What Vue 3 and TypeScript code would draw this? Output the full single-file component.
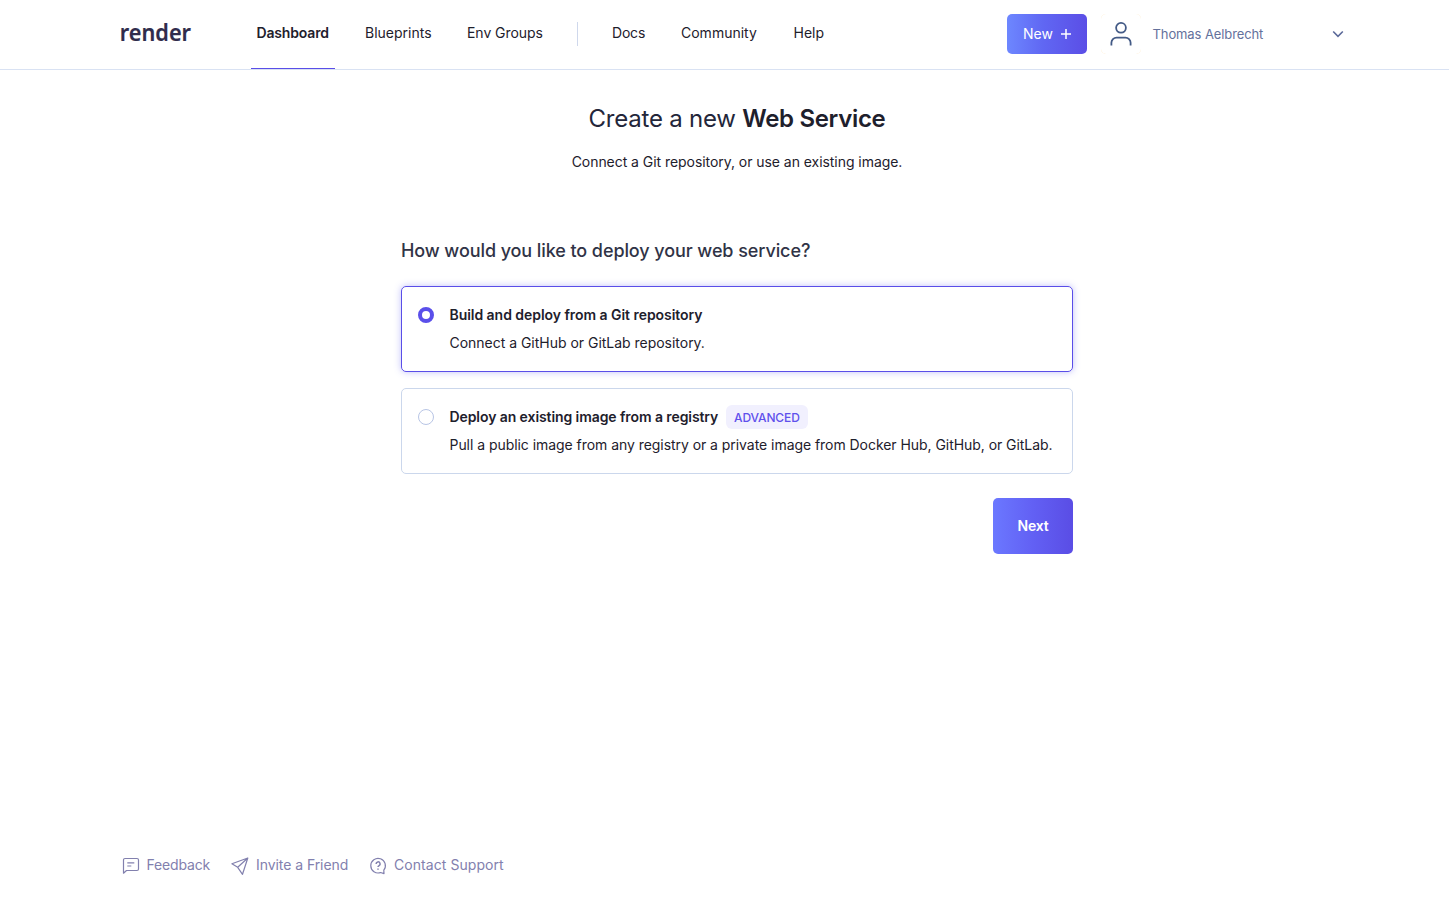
<script setup lang="ts">
import { ref } from 'vue'

interface NavItem { id: string; label: string }
interface DeployOption { id: string; title: string; detail: string; badge?: string }

const primary: NavItem[] = [
  { id: 'dashboard', label: 'Dashboard' },
  { id: 'blueprints', label: 'Blueprints' },
  { id: 'env', label: 'Env Groups' },
]
const secondary: NavItem[] = [
  { id: 'docs', label: 'Docs' },
  { id: 'community', label: 'Community' },
  { id: 'help', label: 'Help' },
]
const options: DeployOption[] = [
  { id: 'git', title: 'Build and deploy from a Git repository', detail: 'Connect a GitHub or GitLab repository.' },
  {
    id: 'image',
    title: 'Deploy an existing image from a registry',
    detail: 'Pull a public image from any registry or a private image from Docker Hub, GitHub, or GitLab.',
    badge: 'ADVANCED',
  },
]
const selected = ref('git')
</script>

<template>
  <div class="page">
    <header class="topbar">
      <svg class="logo" width="72" height="30" viewBox="0 0 72 30">
        <text x="-0.2" y="24" textLength="71.2" lengthAdjust="spacingAndGlyphs">render</text>
      </svg>
      <nav class="nav">
        <a v-for="item in primary" :key="item.id" :class="['link', item.id, { active: item.id === 'dashboard' }]"><span>{{ item.label }}</span></a>
        <i class="divider"></i>
        <a v-for="item in secondary" :key="item.id" :class="['link', item.id]"><span>{{ item.label }}</span></a>
      </nav>
      <button class="new">
        <span>New</span>
        <svg width="12" height="12" viewBox="0 0 12 12"><path d="M6 1v10M1 6h10" /></svg>
      </button>
      <div class="account">
        <div class="avatar-ring">
          <div class="avatar">
            <svg width="24" height="26" viewBox="0 0 24 26">
              <circle cx="12" cy="6.800" r="4.900" />
              <path d="M2.400 24.500v-2.700a5.200 5.200 0 0 1 5.200-5.200h8.800a5.200 5.200 0 0 1 5.200 5.200v2.700" />
            </svg>
          </div>
        </div>
        <span class="user">Thomas Aelbrecht</span>
        <svg class="chevron" width="12" height="8" viewBox="0 0 12 8"><path d="M1.200 1.500 6 6.300l4.800-4.800" /></svg>
      </div>
    </header>

    <main class="content">
      <h1><span>Create a new</span> <b>Web Service</b></h1>
      <p class="sub"><span>Connect a Git repository, or use an existing image.</span></p>
      <h2><span>How would you like to deploy your web service?</span></h2>
      <label v-for="opt in options" :key="opt.id" :class="['card', opt.id, { selected: selected === opt.id }]" @click="selected = opt.id">
        <i class="radio"></i>
        <div class="body">
          <div class="title"><strong>{{ opt.title }}</strong><em v-if="opt.badge" class="badge"><span>{{ opt.badge }}</span></em></div>
          <div class="detail"><span>{{ opt.detail }}</span></div>
        </div>
      </label>
      <button class="next"><span>Next</span></button>
    </main>

    <footer class="footer">
      <a class="feedback">
        <svg width="18" height="18" viewBox="0 0 18 18">
          <path d="M1.500 16.200V3a1.500 1.500 0 0 1 1.500-1.500h12A1.500 1.500 0 0 1 16.500 3v9a1.500 1.500 0 0 1-1.500 1.500H4.500zM5.300 5.800h7M5.300 9h4" />
        </svg>
        <span>Feedback</span>
      </a>
      <a class="invite">
        <svg width="18" height="18" viewBox="0 0 18 18">
          <path d="M16.800 1 .900 6.800l5.800 3.500 4.800 7zM16.800 1 6.700 10.300" />
        </svg>
        <span>Invite a Friend</span>
      </a>
      <a class="support">
        <svg width="18" height="18" viewBox="0 0 18 18">
          <path d="M11.600 15.500a7.300 7.300 0 1 1 3.200-2.300l.200 3.400z" />
          <path class="mark" d="M7.100 6.900a2 2 0 1 1 3 1.700c-.700.400-1.100.700-1.100 1.400M9 11.400v1.400" />
        </svg>
        <span>Contact Support</span>
      </a>
    </footer>
  </div>
</template>

<style>
body { margin: 0; background: #fff; }
</style>

<style scoped>
.page {
  box-sizing: border-box;
  height: 899px;
  display: flex;
  flex-direction: column;
  font-family: Inter, "Liberation Sans", sans-serif;
  font-size: 14px;
  line-height: 20px;
  color: #1e202c;
  white-space: nowrap;
  overflow: hidden;
}
svg { display: block; flex: none; fill: none; overflow: visible; }
button { border: 0; padding: 0; margin: 0; font: inherit; color: #fff; display: flex; align-items: center; border-radius: 5px; }
.topbar { flex: none; box-sizing: border-box; height: 70px; display: flex; border-bottom: 1px solid #d9e2f3; padding-left: 120px; }
.logo { margin-top: 17px; }
.logo text { font: 600 24px "Noto Sans", "Open Sans", sans-serif; fill: #302c4c; stroke: #302c4c; stroke-width: .2; }
.nav { display: flex; margin-left: 59px; width: 579px; }
.link { flex: none; box-sizing: border-box; height: 69px; padding: 23px 6px 0; margin-right: 24px; }
.link.active { font-weight: 600; border-bottom: 1px solid #5a4ee8; letter-spacing: -.16px; }
.dashboard { width: 84px; }
.dashboard span { margin-left: -.5px; }
.blueprints { width: 78px; }
.env { width: 88px; letter-spacing: -.05px; }
.docs { width: 45px; letter-spacing: -.2px; }
.community { width: 88.500px; }
.divider { flex: none; width: 1px; height: 24px; margin: 22px 28px 0 4px; background: #cfd8ec; }
.new { width: 80px; height: 40px; margin: 14px 0 0 177px; padding-left: 16px; box-sizing: border-box; background: linear-gradient(90deg, #6d87ff, #6067f3 45%, #5b4ee6); gap: 8px; }
.new span { width: 29px; }
.new path { stroke: #fff; stroke-width: 1.500; }
.account { display: flex; margin-left: 14px; }
.avatar-ring { width: 40px; height: 40px; margin-top: 14px; border-radius: 5px; background: #fde3b4; }
.avatar { box-sizing: border-box; height: 40px; padding: 7px 0 0 8px; border-radius: 5px; background: #fff; stroke: #435a86; stroke-width: 1.800; }
.user { font-size: 13px; letter-spacing: -.1px; color: #64719c; margin: 24px 0 0 11.500px; width: 179.500px; }
.chevron { margin-top: 30px; stroke: #5b6999; stroke-width: 1.600; }
.content { width: 672px; margin-left: 401px; display: flex; flex-direction: column; flex: 1; }
h1 { margin: 33px 0 0; font-size: 24px; line-height: 32px; font-weight: 400; text-align: center; letter-spacing: -.22px; color: #23263a; }
h1 b { font-weight: 600; letter-spacing: -.32px; color: #1e202c; }
.sub { margin: 17px 0 0; text-align: center; letter-spacing: -.05px; }
h2 { margin: 66px 0 0; font-size: 18px; line-height: 26px; font-weight: 500; color: #303346; letter-spacing: -.085px; }
.card { box-sizing: border-box; height: 86px; border: 1px solid #cbd7ec; border-radius: 5px; margin-top: 16px; padding: 16px; display: flex; gap: 15.500px; }
h2 + .card { margin-top: 22px; }
.card.selected { border-color: #5a4ee8; box-shadow: 0 0 7px rgba(90, 90, 240, .38); }
.radio { box-sizing: border-box; width: 16px; height: 16px; margin-top: 4px; border: 1px solid #b8c5e5; border-radius: 50%; flex: none; }
.selected .radio { border: 4px solid #5a4fea; }
.title { height: 24px; display: flex; align-items: center; }
.title strong { font-weight: 600; letter-spacing: -.045px; }
.image .title strong { width: 268.500px; letter-spacing: -.085px; }
.detail { margin-top: 6px; letter-spacing: -.02px; }
.image .detail { letter-spacing: -.05px; }
.badge { font-style: normal; font-weight: 500; font-size: 12px; letter-spacing: -.12px; color: #5f50ec; background: #f1f0fe; border-radius: 6px; height: 24px; line-height: 26px; width: 82px; box-sizing: border-box; padding-left: 8px; margin-left: 8px; }
.next { width: 80px; height: 56px; margin: 24px 0 0 auto; justify-content: center; background: linear-gradient(90deg, #6b78ff, #6260f4 50%, #5a4de5); font-weight: 600; letter-spacing: -.2px; }
.footer { display: flex; height: 44px; padding-left: 122px; color: #8280ae; }
.footer a { display: flex; }
.footer svg { margin-top: 2px; stroke: currentColor; stroke-width: 1.200; stroke-linejoin: round; }
.mark { stroke-width: 1.500; }
.footer span { margin-left: 7px; }
.feedback { width: 109px; letter-spacing: -.17px; }
.footer .feedback span { margin-left: 6.500px; }
.invite { width: 138px; letter-spacing: -.06px; }
.support { letter-spacing: .06px; }
</style>
